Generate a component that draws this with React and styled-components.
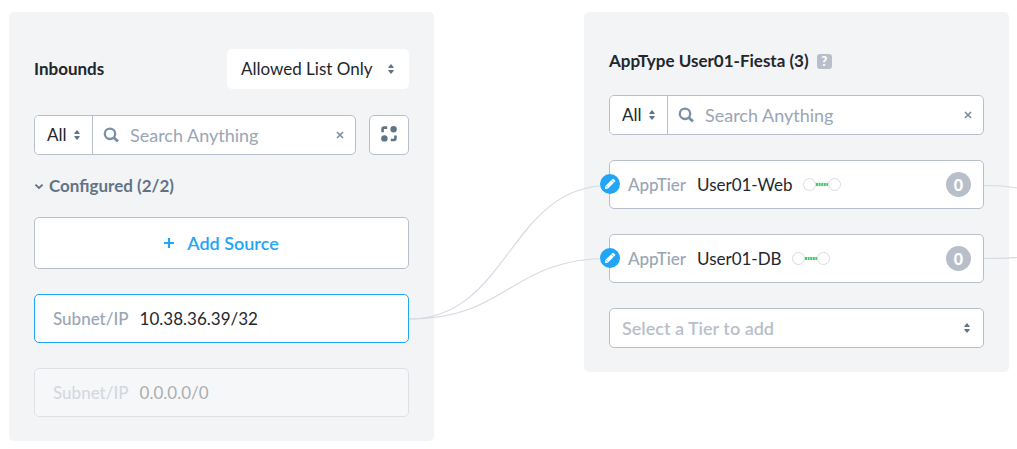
import React from 'react';
import styled, { createGlobalStyle, css } from 'styled-components';

const c = {
  panel: '#f2f4f6',
  border: '#b8bfca',
  text: '#22272e',
  slate: '#627386',
  search: '#7b8fa5',
  label: '#9aa5b5',
  blue: '#22a5f7',
  green: '#36d068',
  edge: '#d6dae1',
};

const Global = createGlobalStyle`
  *, *::before, *::after { box-sizing: border-box; }
  body { margin: 0; background: #fff; }
  body, button, input, select {
    font-family: Lato, "Open Sans", sans-serif;
    font-size: 17px;
    line-height: 24px;
    color: ${c.text};
  }
`;

const Canvas = styled.main`
  display: grid;
  grid-template-columns: minmax(0, 425fr) minmax(0, 150fr) minmax(0, 425fr) 8px;
  padding: 12px 0 8px 9px;
`;

const Panel = styled.section`
  align-self: start;
  padding: 37px 25px 24px;
  border-radius: 5px;
  background: ${c.panel};
`;

const Header = styled.header`
  display: flex;
  align-items: center;
  gap: 8px;
  justify-content: ${(p) => (p.$spread ? 'space-between' : 'flex-start')};
  height: ${(p) => (p.$spread ? 40 : 24)}px;
  margin-bottom: ${(p) => (p.$spread ? 26 : 22)}px;
`;

const Title = styled.h2`
  margin: 0;
  font-size: 17px;
  line-height: 24px;
  font-weight: 700;
`;

const box = css`
  border: 1px solid ${c.border};
  border-radius: 5px;
  background: #fff;
`;

const SelectWrap = styled.div`
  position: relative;
  display: flex;
  flex: none;
  width: ${(p) => p.$width};
  height: 40px;
  ${(p) => p.$outlined && box}
  ${(p) => p.$divided && `border-right: 1px solid ${c.border};`}
`;

const NativeSelect = styled.select`
  appearance: none;
  width: 100%;
  margin: 0;
  padding: 0 ${(p) => (p.$roomy ? 14 : 12)}px;
  border: 0;
  border-radius: 5px;
  background: #fff;
  color: ${(p) => (p.$muted ? c.border : c.text)};
  font-size: ${(p) => (p.$muted ? 18 : 17)}px;
  font-weight: ${(p) => (p.$muted ? 600 : 400)};
`;

const Arrows = styled.svg`
  position: absolute;
  top: 50%;
  right: ${(p) => p.$right}px;
  transform: translateY(-50%);
  pointer-events: none;
`;

const SearchRow = styled.div`
  display: flex;
  gap: 13px;
`;

const SearchBox = styled.div`
  ${box}
  display: flex;
  flex: 1;
  min-width: 0;
  height: 40px;
  align-items: center;
  overflow: hidden;
`;

const SearchIcon = styled.svg`
  flex: none;
  margin: 0 10px;
`;

const SearchInput = styled.input`
  flex: 1;
  min-width: 0;
  padding: 0;
  border: 0;
  outline: 0;
  background: transparent;
  font-size: 18px;
  &::placeholder { color: ${c.label}; opacity: 1; }
`;

const ClearButton = styled.button`
  display: flex;
  padding: 4px;
  margin-right: 7px;
  border: 0;
  background: transparent;
`;

const SquareButton = styled.button`
  ${box}
  display: flex;
  flex: none;
  align-items: center;
  justify-content: center;
  width: 40px;
  height: 40px;
  padding: 0 0 2px;
`;

const GroupToggle = styled.button`
  display: flex;
  align-items: center;
  gap: 5px;
  height: 62px;
  padding: 0;
  border: 0;
  background: transparent;
  color: ${c.slate};
  font-weight: 700;
`;

const Stack = styled.div`
  display: grid;
  gap: 25px;
  margin-top: ${(p) => p.$top || 0}px;
`;

const AddButton = styled.button`
  ${box}
  display: flex;
  align-items: center;
  justify-content: center;
  gap: 13px;
  height: 52px;
  color: ${c.blue};
  font-size: 18px;
  font-weight: 600;
`;

const Card = styled.div`
  ${box}
  position: relative;
  display: flex;
  align-items: center;
  height: 49px;
  padding: 0 12px 0 18px;
  ${(p) => p.$selected && `border-color: ${c.blue};`}
  ${(p) => p.$disabled && 'opacity: 0.35;'}
`;

const Kind = styled.span`
  margin-right: 11px;
  color: ${c.label};
  font-weight: 500;
`;

const Name = styled.span`
  margin-right: 10px;
`;

const Count = styled.span`
  display: flex;
  align-items: center;
  justify-content: center;
  width: 25px;
  height: 25px;
  margin-left: auto;
  border-radius: 50%;
  background: ${c.border};
  color: #fff;
  font-size: 16px;
  font-weight: 900;
`;

const EditButton = styled.button`
  position: absolute;
  z-index: 2;
  top: 13px;
  left: -10px;
  display: flex;
  width: 20px;
  height: 20px;
  padding: 0;
  border: 0;
  border-radius: 50%;
  background: ${c.blue};
`;

const Help = styled.button`
  display: flex;
  align-items: center;
  justify-content: center;
  width: 15px;
  height: 15px;
  padding: 0;
  border: 0;
  border-radius: 3px;
  background: ${c.border};
  color: #fff;
  font-size: 13px;
  line-height: 15px;
  font-weight: 900;
`;

const EdgeCell = styled.div`
  position: relative;
`;

const Edges = styled.svg`
  position: absolute;
  z-index: 1;
  top: 0;
  left: -25px;
  width: calc(100% + ${(p) => p.$extra}px);
  height: 429px;
  pointer-events: none;
  fill: none;
  stroke: ${c.edge};
  stroke-width: 1.2;

  path { vector-effect: non-scaling-stroke; }
`;

function Picker({ label, options, width, right, outlined, divided, muted, roomy }) {
  return (
    <SelectWrap $width={width} $outlined={outlined} $divided={divided}>
      <NativeSelect aria-label={label} $muted={muted} $roomy={roomy}>
        {options.map((o) => <option key={o}>{o}</option>)}
      </NativeSelect>
      <Arrows $right={right} width="6" height="10" viewBox="0 0 6 10" fill={c.slate} aria-hidden="true">
        <path d="M3 0 5.7 3.2Q5.9 4 5 4H1Q.1 4 .3 3.2Z" />
        <path d="M3 10 5.7 6.8Q5.9 6 5 6H1Q.1 6 .3 6.8Z" />
      </Arrows>
    </SelectWrap>
  );
}

function Search() {
  return (
    <SearchBox>
      <Picker label="Search scope" options={['All']} width="58px" right={12} divided />
      <SearchIcon width="17" height="16" viewBox="0 0 17 16" fill="none" stroke={c.search} strokeWidth="2.3" aria-hidden="true">
        <circle cx="7" cy="6.8" r="5.2" />
        <path d="M10.8 10.6 15 14.5" strokeWidth="2.8" />
      </SearchIcon>
      <SearchInput aria-label="Search" placeholder="Search Anything" />
      <ClearButton aria-label="Clear search">
        <svg width="8" height="8" viewBox="0 0 8 8" stroke={c.search} strokeWidth="1.7">
          <path d="M1 1 7 7M7 1 1 7" />
        </svg>
      </ClearButton>
    </SearchBox>
  );
}

function Source({ value, selected, disabled }) {
  return (
    <Card $selected={selected} $disabled={disabled}>
      <Kind>Subnet/IP</Kind>
      <Name>{value}</Name>
    </Card>
  );
}

function Tier({ name }) {
  return (
    <Card>
      <EditButton aria-label={`Edit ${name}`}>
        <svg width="20" height="20" viewBox="0 0 20 20" fill="#fff">
          <path d="M11.2 6.2 13.8 8.8 8.4 14.2Q8 14.6 7.4 14.7L5.6 15Q5 15 5 14.4L5.3 12.6Q5.4 12 5.8 11.6Z" />
          <path d="M11.5 5.9 12.5 4.9Q13 4.5 13.5 4.9L15.1 6.5Q15.5 7 15.1 7.5L14.1 8.5Z" />
          <path d="M6.4 12.2 7.8 13.6" stroke={c.blue} strokeWidth="0.8" />
        </svg>
      </EditButton>
      <Kind>AppTier</Kind>
      <Name>{name}</Name>
      <svg width="38" height="13" viewBox="0 0 38 13" fill="#fff" stroke={c.edge} aria-hidden="true">
        <circle cx="6.5" cy="6.5" r="6" />
        <circle cx="31.5" cy="6.5" r="6" />
        <path d="M13 6.5H25" stroke={c.green} strokeWidth="3" strokeDasharray="2 .6" />
      </svg>
      <Count>0</Count>
    </Card>
  );
}

export default function App() {
  return (
    <>
      <Global />
      <Canvas>
        <Panel>
          <Header $spread>
            <Title>Inbounds</Title>
            <Picker label="Inbound policy" options={['Allowed List Only']} width="182px" right={15} roomy />
          </Header>
          <SearchRow>
            <Search />
            <SquareButton aria-label="Group items">
              <svg width="16" height="16" viewBox="0 0 16 16" fill={c.slate}>
                <circle cx="12.6" cy="3.3" r="3.2" />
                <circle cx="3.4" cy="12.4" r="3.2" />
                <path d="M1.6 6.2V3Q1.6 1.6 3 1.6H6.2M14.4 9.4V12.6Q14.4 14 13 14H9.8" fill="none" stroke={c.slate} strokeWidth="2.6" />
              </svg>
            </SquareButton>
          </SearchRow>
          <GroupToggle aria-expanded="true">
            <svg width="10" height="8" viewBox="0 0 10 8" fill="none" stroke={c.slate} strokeWidth="1.9" aria-hidden="true">
              <path d="M1.4 2.6 5 6 8.6 2.6" />
            </svg>
            Configured (2/2)
          </GroupToggle>
          <Stack>
            <AddButton>
              <svg width="10" height="10" viewBox="0 0 10 10" stroke={c.blue} strokeWidth="2.2" aria-hidden="true">
                <path d="M5 0V10M0 5H10" />
              </svg>
              Add Source
            </AddButton>
            <Source value="10.38.36.39/32" selected />
            <Source value="0.0.0.0/0" disabled />
          </Stack>
        </Panel>

        <EdgeCell>
          <Edges $extra={50} viewBox="0 0 200 429" preserveAspectRatio="none" aria-hidden="true">
            <path d="M0 307C100 307 100 173.5 200 173.5" />
            <path d="M0 307C100 307 100 246.5 200 246.5" />
          </Edges>
        </EdgeCell>

        <Panel>
          <Header>
            <Title>AppType User01-Fiesta (3)</Title>
            <Help aria-label="Help">?</Help>
          </Header>
          <Search />
          <Stack $top={25}>
            <Tier name="User01-Web" />
            <Tier name="User01-DB" />
            <Picker label="Tier" options={['Select a Tier to add']} width="100%" right={13} outlined muted />
          </Stack>
        </Panel>

        <EdgeCell>
          <Edges $extra={25} viewBox="0 0 33 429" preserveAspectRatio="none" aria-hidden="true">
            <path d="M0 173.5C12 173.5 22 174 33 176" />
            <path d="M0 246.5C12 246.5 22 246 33 245.5" />
          </Edges>
        </EdgeCell>
      </Canvas>
    </>
  );
}
